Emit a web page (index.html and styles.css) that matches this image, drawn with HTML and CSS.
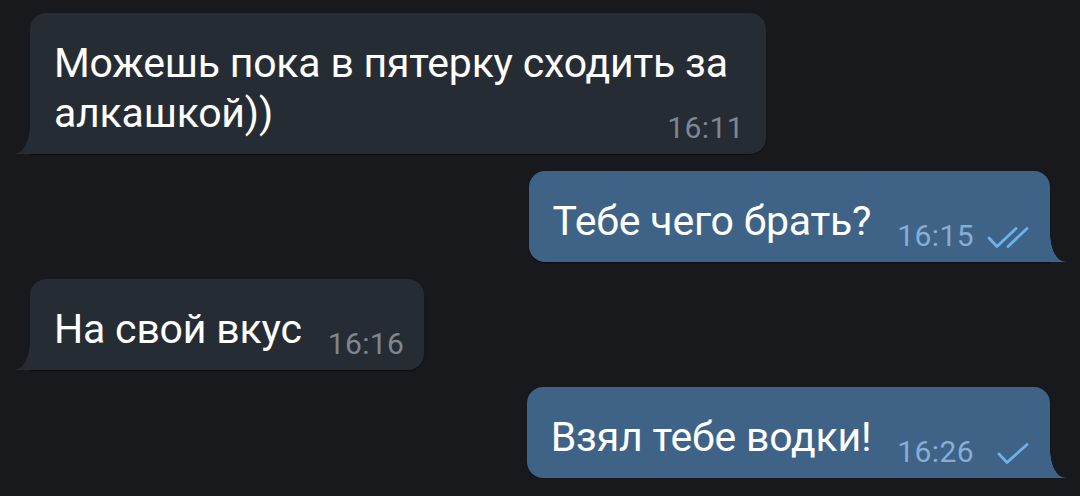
FILE: index.html
```html
<!DOCTYPE html>
<html lang="ru">
<head>
    <meta charset="UTF-8">
    <meta name="viewport" content="width=device-width, initial-scale=1.0">
    <title>Чат</title>
    <link rel="stylesheet" href="styles.css">
</head>
<body>
    <div class="chat">
        <div class="bubble in wrap">
            <span class="text">Можешь пока в пятерку сходить за алкашкой))</span>
            <span class="time">16:11</span>
        </div>

        <div class="bubble out">
            <span class="text">Тебе чего брать?</span>
            <span class="time">16:15</span>
            <svg class="check" viewBox="0 0 44 24" width="44" height="24">
                <path d="M2 12 L10 20.5 L29 2.5" />
                <path d="M21 20.5 L40 2.5" />
            </svg>
        </div>

        <div class="bubble in">
            <span class="text">На свой вкус</span>
            <span class="time">16:16</span>
        </div>

        <div class="bubble out">
            <span class="text">Взял тебе водки!</span>
            <span class="time">16:26</span>
            <svg class="check" viewBox="0 0 44 24" width="44" height="24">
                <path d="M12 12 L20 20.5 L40 2.5" />
            </svg>
        </div>
    </div>
</body>
</html>
```

FILE: styles.css
```css
body {
    margin: 0;
    background-color: #18191c;
    font-family: Roboto, "Noto Sans", sans-serif;
    color: #fff;
}

.chat {
    display: flex;
    flex-direction: column;
    gap: 17px;
    padding: 13px 30px 0 30px;
}

.bubble {
    position: relative;
    display: flex;
    align-items: flex-end;
    box-sizing: border-box;
    padding: 25px 20px 16px 24px;
    border-radius: 16px;
    box-shadow: 0 1px 1px rgba(0, 0, 0, 0.45);
    max-width: 736px;
}

.bubble::before {
    content: "";
    position: absolute;
    bottom: 0;
    width: 15px;
    height: 28px;
}

.in {
    align-self: flex-start;
    background-color: #262c33;
    border-bottom-left-radius: 0;
}

.in::before {
    left: -15px;
    background: radial-gradient(ellipse 15px 28px at 0 0, transparent 97%, #262c33 100%);
}

.out {
    align-self: flex-end;
    background-color: #3e6387;
    border-bottom-right-radius: 0;
    padding-right: 19px;
}

.out::before {
    right: -15px;
    background: radial-gradient(ellipse 15px 28px at 100% 0, transparent 97%, #3e6387 100%);
}

.text {
    font-size: 41px;
    line-height: 50px;
    letter-spacing: -0.2px;
}

.time {
    flex-shrink: 0;
    margin-left: 26px;
    font-size: 30px;
    line-height: 20px;
    letter-spacing: 0.4px;
    color: #7d8793;
}

.out .time {
    color: #86aed6;
}

.wrap {
    flex-direction: column;
    padding-right: 22px;
}

.wrap .time {
    align-self: flex-end;
    margin-top: -20px;
}

.check {
    flex-shrink: 0;
    margin-left: 13px;
    margin-bottom: -4px;
    fill: none;
    stroke: #6cb2ee;
    stroke-width: 2.8;
    stroke-linecap: round;
    stroke-linejoin: round;
}
```
